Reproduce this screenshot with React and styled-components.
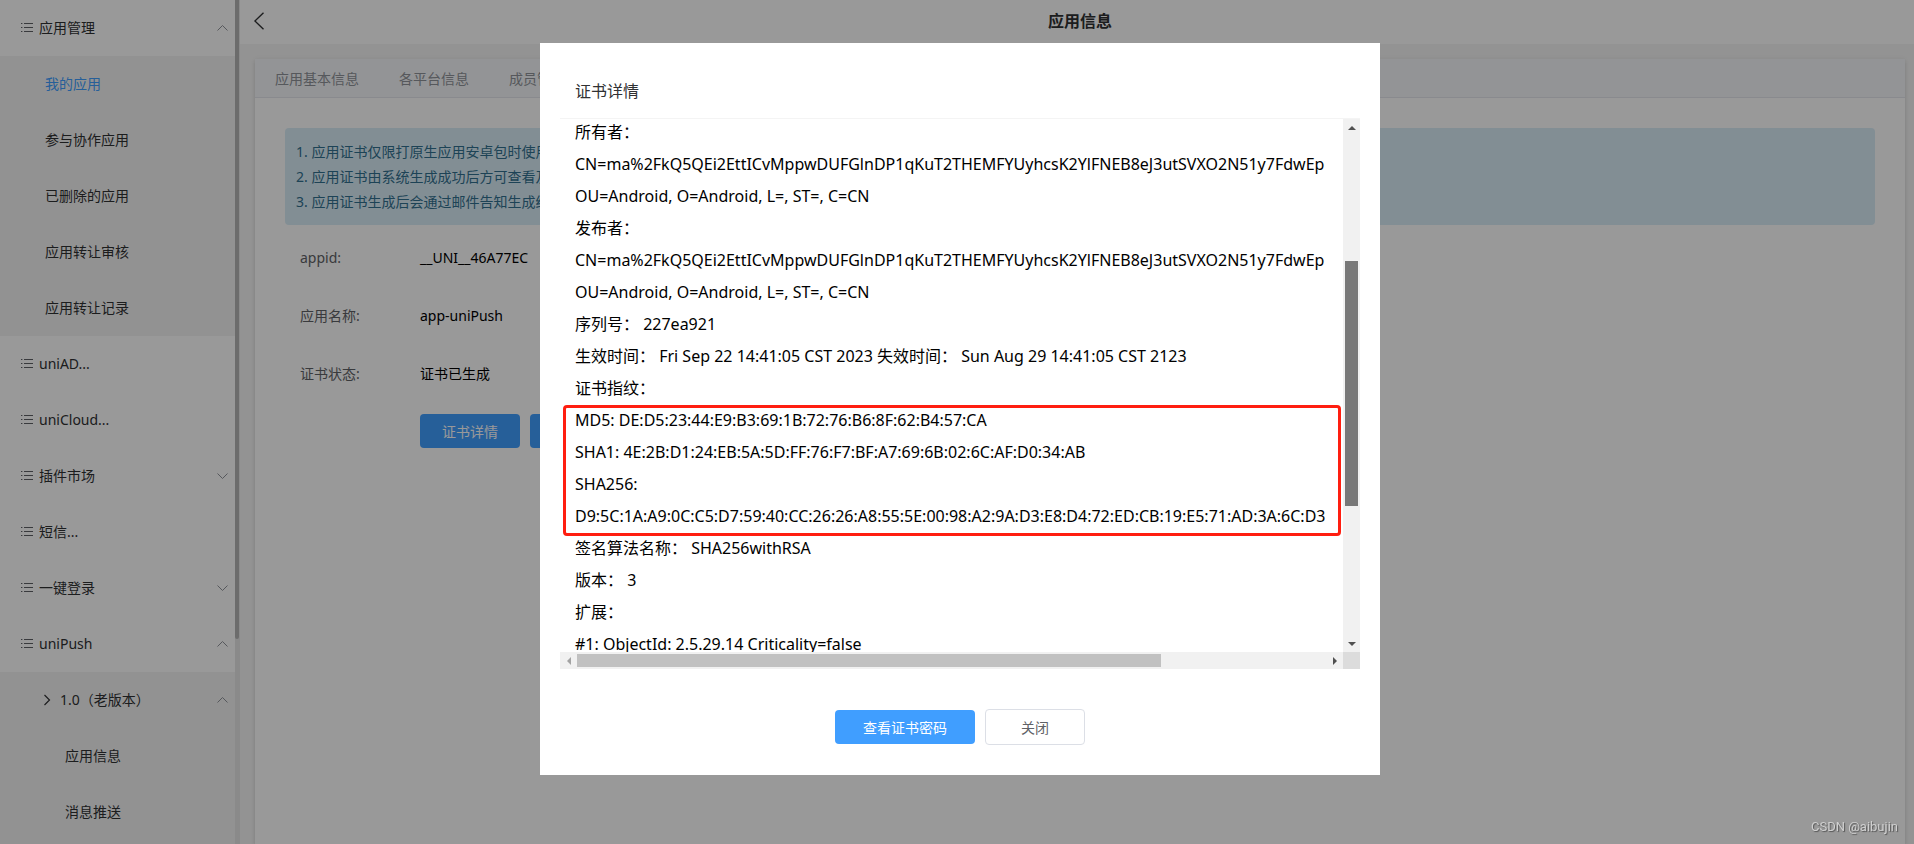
import React, { useLayoutEffect, useRef } from 'react';
import styled, { createGlobalStyle } from 'styled-components';

const GlobalStyle = createGlobalStyle`
  * {
    box-sizing: border-box;
  }

  body {
    margin: 0;
    background: #f5f5f5;
    color: #000;
    font-family: "Noto Sans", "Noto Sans CJK SC", sans-serif;
    font-size: 14px;
  }

  button {
    font-family: inherit;
    cursor: pointer;
  }
`;

const Page = styled.div`
  display: flex;
  height: 100vh;
  overflow: hidden;
`;

/* sidebar */
const Sidebar = styled.aside`
  display: flex;
  flex: none;
  width: 240px;
  background: #fff;
`;

const Menu = styled.nav`
  flex: 1;
  overflow: hidden;
`;

const MenuItem = styled.a`
  display: flex;
  align-items: center;
  gap: 6px;
  height: 56px;
  padding: 0 7px 0 ${({ $indent }) => $indent}px;
  background: ${({ $sub }) => ($sub ? '#f4f4f4' : '#fff')};
  color: ${({ $active }) => ($active ? '#409eff' : '#303133')};
  text-decoration: none;
  white-space: nowrap;
`;

const MenuText = styled.span`
  flex: 1;
  padding-bottom: 2px;
`;

const SideTrack = styled.div`
  width: 5px;
  background: #e6e6e6;
`;

const SideThumb = styled.div`
  width: 4px;
  height: 639px;
  border-radius: 0 0 2px 2px;
  background: #b5b5b5;
`;

/* main */
const Main = styled.main`
  display: flex;
  flex: 1;
  flex-direction: column;
  min-width: 0;
`;

const TopBar = styled.header`
  display: flex;
  flex: none;
  align-items: center;
  height: 44px;
  padding: 0 18px 2px 14px;
  background: #fff;
`;

const BackButton = styled.button`
  display: flex;
  padding: 0;
  border: 0;
  background: none;
`;

const PageTitle = styled.h1`
  flex: 1;
  margin: 0;
  color: #303133;
  font-size: 16px;
  font-weight: 700;
  line-height: 24px;
  text-align: center;
`;

const Card = styled.section`
  flex: 1;
  margin: 15px 9px 0 15px;
  background: #fff;
  box-shadow: 0 2px 4px rgba(0, 0, 0, 0.12), 0 0 6px rgba(0, 0, 0, 0.04);
`;

const Tabs = styled.div`
  display: flex;
  height: 39px;
  gap: 40px;
  padding: 0 20px;
  border-bottom: 1px solid #e4e7ed;
  background: #f5f7fa;
`;

const Tab = styled.button`
  padding: 0;
  border: 0;
  background: none;
  color: #909399;
  font-size: 14px;
`;

const CardBody = styled.div`
  padding: 30px;
`;

const Notice = styled.div`
  padding: 11px;
  border-radius: 4px;
  background: #d9edf7;
  color: #31708f;
  line-height: 25px;
`;

const Info = styled.dl`
  display: grid;
  grid-template-columns: 120px 1fr;
  margin: 4px 0 0;
  padding-left: 15px;
  line-height: 58px;
`;

const InfoLabel = styled.dt`
  color: #606266;
`;

const InfoValue = styled.dd`
  margin: 0;
`;

const Actions = styled.div`
  display: flex;
  gap: 10px;
  padding: 11px 0 0 135px;
`;

const Button = styled.button`
  height: ${({ $plain }) => ($plain ? 36 : 34)}px;
  padding: 0 ${({ $pad }) => $pad}px;
  border: ${({ $plain }) => ($plain ? '1px solid #dcdfe6' : '0')};
  border-radius: 4px;
  background: ${({ $plain }) => ($plain ? '#fff' : '#409eff')};
  color: ${({ $plain }) => ($plain ? '#606266' : '#fff')};
  font-size: 14px;
`;

/* dialog */
const Mask = styled.div`
  position: fixed;
  inset: 0;
  display: flex;
  align-items: flex-start;
  justify-content: center;
  padding: 43px 0 0 6px;
  background: rgba(0, 0, 0, 0.4);
`;

const Dialog = styled.div`
  width: 840px;
  padding: 30px 20px;
  background: #fff;
`;

const DialogTitle = styled.h2`
  margin: 0;
  padding: 2px 15px 11px;
  color: #303133;
  font-size: 16px;
  font-weight: 400;
  line-height: 32px;
`;

const ScrollBox = styled.div`
  display: grid;
  grid-template-columns: minmax(0, 1fr) 17px;
  grid-template-rows: 533px 17px;
  border-top: 1px solid #f4f4f4;
`;

const Viewport = styled.div`
  overflow: hidden;
  padding: 0 0 0 15px;
`;

const Line = styled.p`
  margin: 0;
  font-size: 16px;
  line-height: 32px;
  white-space: pre;
`;

const Fingerprints = styled.div`
  position: relative;

  &::after {
    content: "";
    position: absolute;
    inset: 1px 2px -4px -12px;
    border: 3px solid #ff1e10;
    border-radius: 4px;
  }
`;

const Track = styled.div`
  display: flex;
  flex-direction: ${({ $vertical }) => ($vertical ? 'column' : 'row')};
  padding: ${({ $vertical }) => ($vertical ? '0 2px' : '2px 0')};
  background: #f1f1f1;
`;

const TrackSpace = styled.div`
  flex: ${({ $grow }) => $grow};
`;

const Thumb = styled.div`
  flex: ${({ $grow }) => $grow};
  background: ${({ $dragged }) => ($dragged ? '#787878' : '#c1c1c1')};
`;

const TrackEnd = styled.div`
  display: flex;
  flex: 0 0 17px;
  align-items: center;
  justify-content: center;
`;

const Corner = styled.div`
  background: #dcdcdc;
`;

const DialogFooter = styled.footer`
  display: flex;
  align-items: center;
  justify-content: center;
  gap: 10px;
  padding-top: 40px;
`;

const Watermark = styled.span`
  position: absolute;
  right: 16px;
  bottom: 9px;
  color: #d0d0d0;
  font-family: Roboto, sans-serif;
  font-size: 13px;
  line-height: 16px;
  text-shadow: 1px 1px 1px #555;
`;

const ListIcon = () => (
  <svg width="12" height="10" viewBox="0 0 12 10" fill="none" stroke="#606266">
    <path d="M0 .5h1.4M3 .5h9M0 4.5h1.4M3 4.5h9M0 8.5h1.4M3 8.5h9" />
  </svg>
);

const CHEVRONS = {
  up: 'M.5 6.5 5.5 1.5l5 5',
  down: 'M.5 1.5l5 5 5-5',
};

const Chevron = ({ dir }) => (
  <svg width="11" height="8" viewBox="0 0 11 8" fill="none" stroke="#909399">
    <path d={CHEVRONS[dir]} />
  </svg>
);

const RightIcon = () => (
  <svg width="11" height="12" viewBox="0 0 11 12" fill="none" stroke="#303133" strokeWidth="1.2">
    <path d="M1.5 1l5 5-5 5" />
  </svg>
);

const BackIcon = () => (
  <svg width="10" height="18" viewBox="0 0 10 18" fill="none" stroke="#303133" strokeWidth="1.4">
    <path d="M9.5 .8.9 9l8.6 8.2" />
  </svg>
);

const ARROWS = {
  up: 'M0 6 4 2l4 4z',
  down: 'M0 2h8L4 6z',
  left: 'M6 0v8L2 4z',
  right: 'M2 0l4 4-4 4z',
};

const Arrow = ({ dir, color = '#505050' }) => (
  <svg width="8" height="8" viewBox="0 0 8 8" fill={color}>
    <path d={ARROWS[dir]} />
  </svg>
);

const menus = [
  { text: '应用管理', indent: 21, icon: 'list', arrow: 'up' },
  { text: '我的应用', indent: 45, sub: true, active: true },
  { text: '参与协作应用', indent: 45, sub: true },
  { text: '已删除的应用', indent: 45, sub: true },
  { text: '应用转让审核', indent: 45, sub: true },
  { text: '应用转让记录', indent: 45, sub: true },
  { text: 'uniAD...', indent: 21, icon: 'list' },
  { text: 'uniCloud...', indent: 21, icon: 'list' },
  { text: '插件市场', indent: 21, icon: 'list', arrow: 'down' },
  { text: '短信...', indent: 21, icon: 'list' },
  { text: '一键登录', indent: 21, icon: 'list', arrow: 'down' },
  { text: 'uniPush', indent: 21, icon: 'list', arrow: 'up' },
  { text: '1.0（老版本）', indent: 43, icon: 'right', arrow: 'up', sub: true },
  { text: '应用信息', indent: 65, sub: true },
  { text: '消息推送', indent: 65, sub: true },
  { text: '', indent: 65, sub: true },
];

const NAME =
  'CN=ma%2FkQ5QEi2EttICvMppwDUFGlnDP1qKuT2THEMFYUyhcsK2YlFNEB8eJ3utSVXO2N51y7FdwEp';
const UNIT = 'OU=Android, O=Android, L=, ST=, C=CN';

const App = () => {
  const viewport = useRef();

  // 证书内容打开时已经滚动了一点
  useLayoutEffect(() => {
    viewport.current.scrollTop = 3;
  }, []);

  return (
    <>
      <GlobalStyle />
      <Page>
        <Sidebar>
          <Menu>
            {menus.map((m, i) => (
              <MenuItem key={i} href="#" $indent={m.indent} $sub={m.sub} $active={m.active}>
                {m.icon === 'list' && <ListIcon />}
                {m.icon === 'right' && <RightIcon />}
                <MenuText>{m.text}</MenuText>
                {m.arrow && <Chevron dir={m.arrow} />}
              </MenuItem>
            ))}
          </Menu>
          <SideTrack>
            <SideThumb />
          </SideTrack>
        </Sidebar>
        <Main>
          <TopBar>
            <BackButton aria-label="返回">
              <BackIcon />
            </BackButton>
            <PageTitle>应用信息</PageTitle>
          </TopBar>
          <Card>
            <Tabs>
              <Tab>应用基本信息</Tab>
              <Tab>各平台信息</Tab>
              <Tab>成员管理</Tab>
            </Tabs>
            <CardBody>
              <Notice>
                <div>1. 应用证书仅限打原生应用安卓包时使用</div>
                <div>2. 应用证书由系统生成成功后方可查看及</div>
                <div>3. 应用证书生成后会通过邮件告知生成结</div>
              </Notice>
              <Info>
                <InfoLabel>appid:</InfoLabel>
                <InfoValue>__UNI__46A77EC</InfoValue>
                <InfoLabel>应用名称:</InfoLabel>
                <InfoValue>app-uniPush</InfoValue>
                <InfoLabel>证书状态:</InfoLabel>
                <InfoValue>证书已生成</InfoValue>
              </Info>
              <Actions>
                <Button $pad={22}>证书详情</Button>
                <Button $pad={22} aria-label="下载证书" />
              </Actions>
            </CardBody>
          </Card>
        </Main>
      </Page>
      <Mask>
        <Dialog role="dialog" aria-labelledby="dialogTitle">
          <DialogTitle id="dialogTitle">证书详情</DialogTitle>
          <ScrollBox>
            <Viewport ref={viewport}>
              <Line>所有者：</Line>
              <Line>{NAME}</Line>
              <Line>{UNIT}</Line>
              <Line>发布者：</Line>
              <Line>{NAME}</Line>
              <Line>{UNIT}</Line>
              <Line>序列号： 227ea921</Line>
              <Line>生效时间： Fri Sep 22 14:41:05 CST 2023 失效时间： Sun Aug 29 14:41:05 CST 2123</Line>
              <Line>证书指纹：</Line>
              <Fingerprints>
                <Line>MD5: DE:D5:23:44:E9:B3:69:1B:72:76:B6:8F:62:B4:57:CA</Line>
                <Line>SHA1: 4E:2B:D1:24:EB:5A:5D:FF:76:F7:BF:A7:69:6B:02:6C:AF:D0:34:AB</Line>
                <Line>SHA256:</Line>
                <Line>D9:5C:1A:A9:0C:C5:D7:59:40:CC:26:26:A8:55:5E:00:98:A2:9A:D3:E8:D4:72:ED:CB:19:E5:71:AD:3A:6C:D3</Line>
              </Fingerprints>
              <Line>签名算法名称： SHA256withRSA</Line>
              <Line>版本： 3</Line>
              <Line>扩展：</Line>
              <Line>#1: ObjectId: 2.5.29.14 Criticality=false</Line>
            </Viewport>
            <Track $vertical>
              <TrackEnd>
                <Arrow dir="up" />
              </TrackEnd>
              <TrackSpace $grow={125} />
              <Thumb $grow={245} $dragged />
              <TrackSpace $grow={129} />
              <TrackEnd>
                <Arrow dir="down" />
              </TrackEnd>
            </Track>
            <Track>
              <TrackEnd>
                <Arrow dir="left" color="#a3a3a3" />
              </TrackEnd>
              <Thumb $grow={584} />
              <TrackSpace $grow={165} />
              <TrackEnd>
                <Arrow dir="right" />
              </TrackEnd>
            </Track>
            <Corner />
          </ScrollBox>
          <DialogFooter>
            <Button $pad={28}>查看证书密码</Button>
            <Button $plain $pad={35}>关闭</Button>
          </DialogFooter>
        </Dialog>
        <Watermark>CSDN @aibujin</Watermark>
      </Mask>
    </>
  );
};

export default App;
